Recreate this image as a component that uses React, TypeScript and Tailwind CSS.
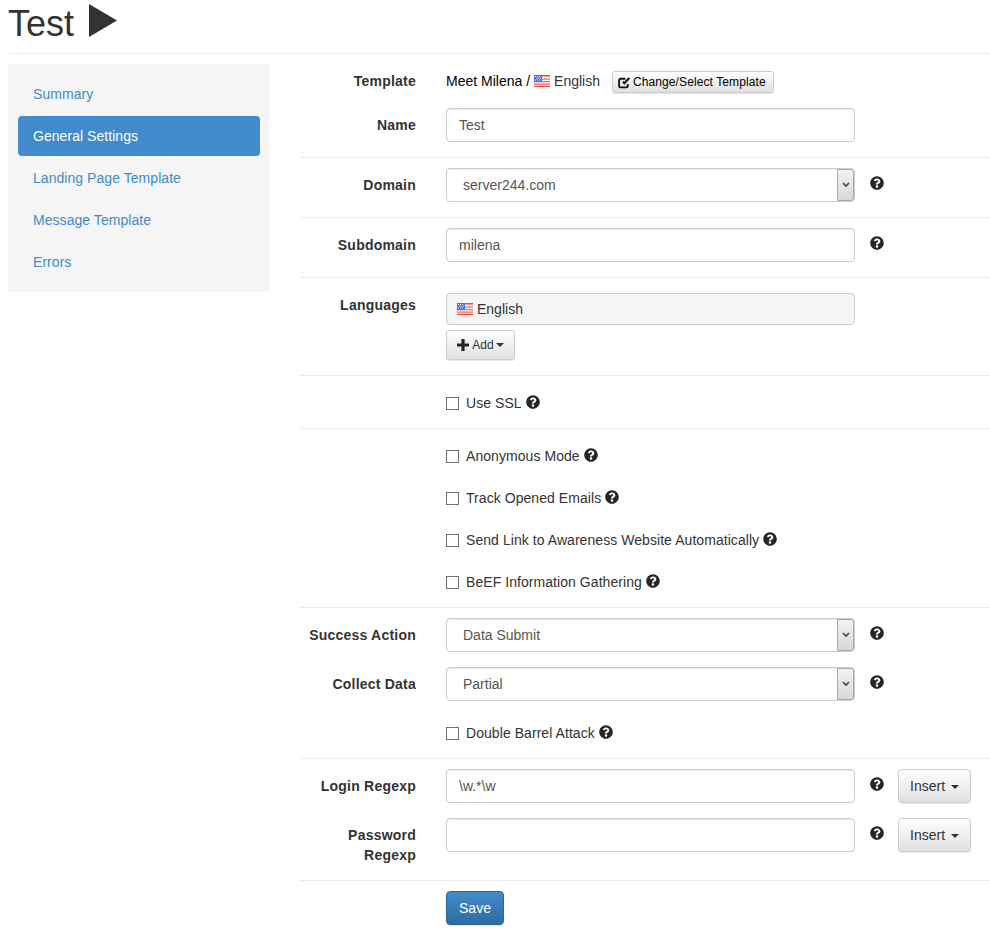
import type { ReactNode } from 'react';
import { FaQuestionCircle } from 'react-icons/fa';

const NAV_ITEMS = ['Summary', 'General Settings', 'Landing Page Template', 'Message Template', 'Errors'];

function Flag() {
  return (
    <svg width="16" height="12" viewBox="0 0 16 12" className="inline-block">
      <rect width="16" height="12" fill="#f4f4f8" />
      <rect y="0" x="0" width="16" height="1.5" fill="#e8503a" />
      <rect y="3.5" width="16" height="1.2" fill="#ee6a5a" />
      <rect y="6" width="16" height="1.2" fill="#ee6a5a" />
      <rect y="8.5" width="16" height="1.2" fill="#ee6a5a" />
      <rect y="10.8" width="16" height="1.2" fill="#e8503a" />
      <rect width="8" height="7" fill="#4a6fe0" />
      <path d="M1 1.5h1M3 1.5h1M5 1.5h1M2 3.2h1M4 3.2h1M6 3.2h1M1 5h1M3 5h1M5 5h1" stroke="#fff" strokeWidth="0.9" />
    </svg>
  );
}

function EditIcon() {
  return (
    <svg width="13" height="13" viewBox="0 0 14 13" className="mr-[2px] shrink-0">
      <path d="M10.5 8v2.2a1.6 1.6 0 0 1-1.6 1.6H2.8a1.6 1.6 0 0 1-1.6-1.6V4.1a1.6 1.6 0 0 1 1.6-1.6H8" fill="none" stroke="#111" strokeWidth="2" />
      <path d="M4.6 6.6l2.2 2.2L13 2.4 11.4.9 6.8 5.6 5.9 5z" fill="#111" />
    </svg>
  );
}

function PlusIcon() {
  return (
    <svg width="12" height="12" viewBox="0 0 12 12" className="mr-[3px] shrink-0">
      <path d="M4.4 0h3.2v4.4H12v3.2H7.6V12H4.4V7.6H0V4.4h4.4z" fill="#222" />
    </svg>
  );
}

function Help() {
  return <FaQuestionCircle className="text-[#262626] w-[14px] h-[14px] shrink-0" />;
}

function Row({ label, children, side, className = 'mb-[15px]' }: { label?: ReactNode; children: ReactNode; side?: ReactNode; className?: string }) {
  return (
    <div className={`flex ${className}`}>
      <label className="w-[116px] pt-[7px] text-right font-bold leading-5 text-[#333] tracking-[0.22px] shrink-0">{label}</label>
      <div className="w-[409px] ml-[30px] shrink-0">{children}</div>
      {side}
    </div>
  );
}

function TextInput({ value }: { value: string }) {
  return (
    <input
      defaultValue={value}
      className="block w-full h-[34px] px-3 bg-white border border-[#ccc] rounded text-[#555] shadow-[inset_0_1px_1px_rgba(0,0,0,0.075)] outline-none"
    />
  );
}

function Select({ value }: { value: string }) {
  return (
    <div className="relative">
      <select
        defaultValue={value}
        className="block w-full h-[34px] pl-4 pr-6 bg-white border border-[#ccc] rounded text-[#555] appearance-none shadow-[inset_0_1px_1px_rgba(0,0,0,0.075)] outline-none"
      >
        <option>{value}</option>
      </select>
      <span className="absolute right-[1px] top-[1px] bottom-[1px] w-[17px] flex items-center justify-center border border-[#a8a8a8] rounded-r-[3px] bg-gradient-to-b from-[#f2f2f2] to-[#d8d8d8]">
        <svg width="8" height="6" viewBox="0 0 8 6">
          <path d="M1 1l3 3 3-3" fill="none" stroke="#444" strokeWidth="1.6" />
        </svg>
      </span>
    </div>
  );
}

function SideHelp({ children }: { children?: ReactNode }) {
  return (
    <div className="flex items-start ml-[15px]">
      <span className="pt-2">
        <Help />
      </span>
      {children}
    </div>
  );
}

function CheckRow({ label, className = 'mb-2' }: { label: string; className?: string }) {
  return (
    <div className={`flex items-center h-[34px] pl-[146px] text-[#333] ${className}`}>
      <input type="checkbox" className="appearance-none w-[13px] h-[13px] border border-[#707070] bg-white mr-[7px]" />
      <span className="tracking-[0.06px]">{label}</span>
      <span className="ml-[4px] -mt-[3px]">
        <Help />
      </span>
    </div>
  );
}

function Caret() {
  return <span className="inline-block w-0 h-0 ml-[2px] align-middle border-x-4 border-x-transparent border-t-4 border-t-[#333]" />;
}

function InsertButton() {
  return (
    <button className="ml-[14px] w-[73px] h-[34px] text-[#333] bg-gradient-to-b from-white to-[#e0e0e0] border border-[#ccc] rounded shadow-[0_1px_1px_rgba(0,0,0,0.1)]">
      Insert <Caret />
    </button>
  );
}

export default function App() {
  return (
    <div className="w-[990px] min-h-[934px] bg-white pl-2 text-sm text-[#333] font-['Liberation_Sans',Arial,sans-serif]">
      <div className="h-[54px] border-b border-[#eee] flex items-start">
        <h1 className="text-[36px] leading-[48px] font-normal text-[#333]">Test</h1>
        <svg width="28" height="33" viewBox="0 0 28 33" className="ml-[15px] mt-1">
          <polygon points="0,0 28,16.5 0,33" fill="#333" />
        </svg>
      </div>

      <div className="flex items-start mt-[10px]">
        <nav className="w-[262px] bg-[#f5f5f5] rounded p-[10px] flex flex-col gap-[2px] shrink-0">
          {NAV_ITEMS.map((item) => (
            <a
              key={item}
              className={`h-10 px-[15px] flex items-center rounded tracking-[0.05px] ${
                item === 'General Settings' ? 'bg-[#428bca] text-white' : 'text-[#428bca]'
              }`}
            >
              {item}
            </a>
          ))}
        </nav>

        <form className="w-[690px] ml-[30px]">
          <div>
            <Row label="Template">
              <div className="flex items-center h-[22px] mt-[7px] text-black whitespace-nowrap">
                <span className="-mt-[3px]">Meet Milena /</span>
                <span className="ml-[4px] mr-[4px] flex items-center -mt-[2px]">
                  <Flag />
                </span>
                <span className="text-[#333] -mt-[3px]">English</span>
                <button
                  type="button"
                  className="ml-3 w-[162px] h-[22px] pl-[5px] flex items-center text-xs tracking-[0.1px] text-black bg-gradient-to-b from-white to-[#e0e0e0] border border-[#ccc] rounded-[3px] shadow-[0_1px_1px_rgba(0,0,0,0.1)]"
                >
                  <EditIcon />
                  Change/Select Template
                </button>
              </div>
            </Row>
            <Row label="Name">
              <TextInput value="Test" />
            </Row>
          </div>

          <div className="border-t border-[#eee] pt-[10px]">
            <Row label="Domain" side={<SideHelp />}>
              <Select value="server244.com" />
            </Row>
          </div>

          <div className="border-t border-[#eee] pt-[10px]">
            <Row label="Subdomain" side={<SideHelp />}>
              <TextInput value="milena" />
            </Row>
          </div>

          <div className="border-t border-[#eee] pt-[15px]">
            <Row label={<span className="block -mt-[5px]">Languages</span>}>
              <div className="h-[32px] flex items-center pl-[10px] bg-[#f5f5f5] border border-[#ccc] rounded">
                <Flag />
                <span className="ml-1">English</span>
              </div>
              <button
                type="button"
                className="mt-[5px] w-[69px] h-[30px] flex items-center justify-center text-xs text-[#333] bg-gradient-to-b from-white to-[#e0e0e0] border border-[#ccc] rounded-[3px] shadow-[0_1px_1px_rgba(0,0,0,0.1)]"
              >
                <PlusIcon />
                Add
                <Caret />
              </button>
            </Row>
          </div>

          <div className="border-t border-[#eee] pt-[10px]">
            <CheckRow label="Use SSL" />
          </div>

          <div className="border-t border-[#eee] pt-[10px]">
            <CheckRow label="Anonymous Mode" />
            <CheckRow label="Track Opened Emails" />
            <CheckRow label="Send Link to Awareness Website Automatically" />
            <CheckRow label="BeEF Information Gathering" />
          </div>

          <div className="border-t border-[#eee] pt-[10px]">
            <Row label="Success Action" side={<SideHelp />}>
              <Select value="Data Submit" />
            </Row>
            <Row label="Collect Data" side={<SideHelp />}>
              <Select value="Partial" />
            </Row>
            <CheckRow label="Double Barrel Attack" />
          </div>

          <div className="border-t border-[#eee] pt-[10px]">
            <Row label="Login Regexp" side={<SideHelp><InsertButton /></SideHelp>}>
              <TextInput value="\w.*\w" />
            </Row>
            <Row
              label={
                <>
                  Password
                  <br />
                  Regexp
                </>
              }
              side={<SideHelp><InsertButton /></SideHelp>}
            >
              <TextInput value="" />
            </Row>
          </div>

          <div className="border-t border-[#eee] pt-[10px] pl-[146px]">
            <button
              type="button"
              className="w-[58px] h-[34px] text-white bg-gradient-to-b from-[#428bca] to-[#2d6ca2] border border-[#2b669a] rounded shadow-[0_1px_1px_rgba(0,0,0,0.1)]"
            >
              Save
            </button>
          </div>
        </form>
      </div>
    </div>
  );
}
